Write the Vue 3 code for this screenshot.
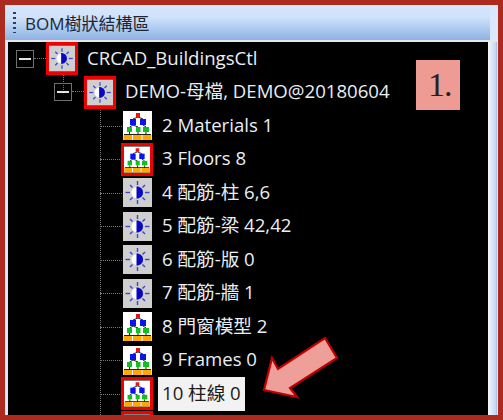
<script setup>
import { ref } from 'vue';

// Filas del arbol
const rows = ref([
    { id: 1, level: 0, icon: 'bulb', marked: true, open: true, label: 'CRCAD_BuildingsCtl' },
    { id: 2, level: 1, icon: 'bulb', marked: true, open: true, label: 'DEMO-母檔, DEMO@20180604' },
    { id: 3, level: 2, icon: 'tree', marked: false, label: '2 Materials 1' },
    { id: 4, level: 2, icon: 'tree', marked: true, label: '3 Floors 8' },
    { id: 5, level: 2, icon: 'bulb', marked: false, label: '4 配筋-柱 6,6' },
    { id: 6, level: 2, icon: 'bulb', marked: false, label: '5 配筋-梁 42,42' },
    { id: 7, level: 2, icon: 'bulb', marked: false, label: '6 配筋-版 0' },
    { id: 8, level: 2, icon: 'bulb', marked: false, label: '7 配筋-牆 1' },
    { id: 9, level: 2, icon: 'tree', marked: false, label: '8 門窗模型 2' },
    { id: 10, level: 2, icon: 'tree', marked: false, label: '9 Frames 0' },
    { id: 11, level: 2, icon: 'tree', marked: true, selected: true, label: '10 柱線 0' },
    { id: 12, level: 2, icon: 'tree', marked: true, label: '' }
]);

// Rayos de la bombilla
const rays = [
    [14.5, 3, 14.5, 7], [14.5, 22, 14.5, 26],
    [2.5, 14.5, 7, 14.5], [22, 14.5, 26.5, 14.5],
    [7, 7, 9.5, 9.5], [19.5, 19.5, 22, 22],
    [22, 7, 19.5, 9.5], [9.5, 19.5, 7, 22]
];
</script>

<template>
    <div class="frame">
        <div class="panel">
            <div class="title-bar">
                <span class="grip"></span>
                <span class="title">BOM樹狀結構區</span>
            </div>
            <div class="content">
                <div class="tree">
                    <span class="guide guide-root"></span>
                    <span class="guide guide-leaves"></span>

                    <div v-for="row in rows" :key="row.id" class="row" :class="'level-' + row.level">
                        <span v-if="row.open" class="toggle"><i></i></span>
                        <span class="slot" :class="{ marked: row.marked }">
                            <svg v-if="row.icon === 'bulb'" class="icon bulb" viewBox="0 0 29 29">
                                <rect width="29" height="29" fill="#cfcfcf" />
                                <line v-for="(r, i) in rays" :key="i" :x1="r[0]" :y1="r[1]" :x2="r[2]" :y2="r[3]"
                                    stroke="#3e46cc" stroke-width="1.4" />
                                <circle cx="14" cy="14.5" r="5.5" fill="#fff" />
                                <path d="M13.5 8.5c4 0 6.5 2.5 6.5 6s-2.500 6-6.500 6z" fill="#0808c0" />
                            </svg>
                            <svg v-else class="icon org" viewBox="0 0 29 29">
                                <rect width="29" height="29" fill="#fff" />
                                <path d="M15 6 10 8M15 6l5 2M10 14 6.500 16M10 14l5 2M20 14l3 2M6.500 21v3M15 21v3M23 21v3M1 23.500h27"
                                    fill="none" stroke="#222" stroke-width="1" />
                                <rect x="13" y="2" width="4" height="4" fill="#f01010" />
                                <rect x="7" y="8" width="6" height="6" fill="#0a14f0" />
                                <rect x="17" y="8" width="6" height="6" fill="#0a14f0" />
                                <rect x="4" y="16" width="5" height="5" fill="#10c020" />
                                <rect x="13" y="16" width="4.500" height="5" fill="#10c020" />
                                <rect x="20" y="16" width="6" height="5" fill="#10c020" />
                                <rect x="0.500" y="24" width="8.500" height="5" fill="#ffa800" />
                                <rect x="10" y="24" width="8.500" height="5" fill="#ffa800" />
                                <rect x="19.500" y="24" width="9" height="5" fill="#ffa800" />
                            </svg>
                        </span>
                        <span v-if="row.label" class="label" :class="{ selected: row.selected }">{{ row.label }}</span>
                    </div>

                    <!-- Anotaciones sobre la captura -->
                    <div class="note">1.</div>
                    <svg class="arrow" viewBox="0 0 90 70">
                        <path d="M4 55 12 23 18 34 65 3 77 23 30 53 37 62z" fill="#ef9f99" stroke="#c00000"
                            stroke-width="2.2" />
                    </svg>
                </div>
                <div class="side"></div>
            </div>
        </div>
    </div>
</template>

<style>
html,
body {
    margin: 0;
    background: #ad2a1f;
}
</style>

<style scoped>
.frame {
    width: 503px;
    height: 420px;
    box-sizing: border-box;
    padding: 5px;
    background-color: #ad2a1f;
    overflow: hidden;
    font-family: "Open Sans", "Noto Sans CJK TC", sans-serif;
}

.panel {
    display: flex;
    flex-direction: column;
    height: 100%;
    background-color: #dbe7fa;
}

.title-bar {
    display: flex;
    align-items: center;
    flex: none;
    width: 485px;
    height: 35px;
    box-sizing: border-box;
    padding-left: 8px;
    background: linear-gradient(#d6e7fc 0%, #cfe2fa 35%, #8db2e4 100%);
}

.grip {
    width: 3px;
    height: 21px;
    margin-right: 9px;
    background: repeating-linear-gradient(#2d3f5c 0 2px, transparent 2px 5px);
}

.title {
    font-size: 17px;
    color: #1c2636;
}

.content {
    display: flex;
    flex: 1;
    min-height: 0;
    padding-left: 3px;
    border-top: 2px solid #e8e8e8;
}

.tree {
    position: relative;
    width: 480px;
    background-color: #000;
    overflow: hidden;
    border-right: 2px solid #f2f2f2;
}

.side {
    flex: 1;
    margin: 0 1px 0 0;
    border-right: 1px solid #a9c2e6;
    background: linear-gradient(90deg, #e6eefb, #c4d6f0);
}

.row {
    position: relative;
    display: flex;
    align-items: center;
    height: 33.5px;
}

.level-0 {
    padding-left: 8px;
}

.level-1 {
    padding-left: 46px;
}

.level-2 {
    padding-left: 113px;
}

/* Linea punteada hacia el icono */
.level-2::before {
    content: "";
    position: absolute;
    left: 92px;
    top: 50%;
    width: 22px;
    border-top: 1px dotted #777;
}

.toggle {
    position: relative;
    display: flex;
    align-items: center;
    justify-content: center;
    flex: none;
    width: 18px;
    height: 18px;
    box-sizing: border-box;
    margin-right: 12px;
    border: 1px solid #6f6f6f;
}

.toggle i {
    width: 12px;
    height: 2px;
    background-color: #e4e4e4;
}

.toggle::after {
    content: "";
    position: absolute;
    left: 17px;
    top: 7px;
    width: 12px;
    border-top: 1px dotted #777;
}

.guide {
    position: absolute;
    border-left: 1px dotted #777;
}

.guide-root {
    left: 55px;
    top: 33px;
    height: 17px;
}

.guide-leaves {
    left: 92px;
    top: 66px;
    bottom: 0;
}

.slot {
    position: relative;
    display: flex;
    align-items: center;
    justify-content: center;
    flex: none;
    width: 32px;
    height: 33px;
    box-sizing: border-box;
}

.slot.marked {
    border: 3px solid #f00000;
}

.row:last-child .slot {
    margin-top: 5px;
}

.icon {
    display: block;
    flex: none;
    width: 29px;
    height: 29px;
}

.marked .icon {
    width: 26px;
    height: 27px;
}

.label {
    margin-left: 5px;
    padding: 0 4px 3px 4px;
    font-size: 18.6px;
    line-height: 31px;
    white-space: nowrap;
    color: #e9eef4;
}

.label.selected {
    background-color: #f2f2f2;
    color: #1a1a1a;
}

.note {
    position: absolute;
    left: 408px;
    top: 18px;
    width: 44px;
    height: 50px;
    box-sizing: border-box;
    padding-left: 12px;
    background-color: #ee9b94;
    font-family: "Liberation Serif", serif;
    font-size: 34px;
    line-height: 50px;
    letter-spacing: -1px;
    color: #2a2020;
}

.arrow {
    position: absolute;
    left: 252px;
    top: 293px;
    width: 90px;
    height: 70px;
}
</style>
